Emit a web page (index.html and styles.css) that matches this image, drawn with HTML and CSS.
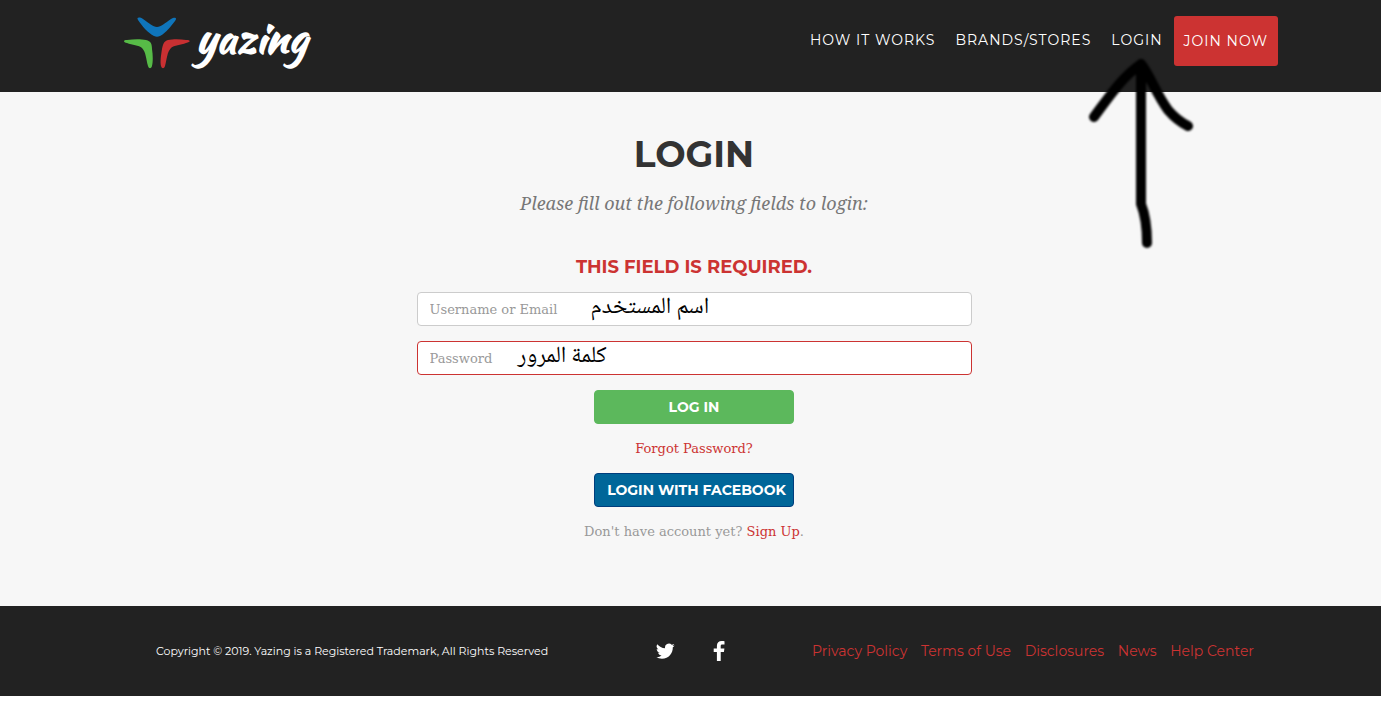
FILE: index.html
```
<!DOCTYPE html>
<html lang="en">
  <head>
    <meta charset="UTF-8" />
    <meta name="viewport" content="width=device-width, initial-scale=1.0" />
    <title>Yazing - Login</title>
    <link rel="stylesheet" href="styles.css">
  </head>
  <body>
    <header class="header">
      <div class="container header-row">
        <a class="logo" href="#" aria-label="yazing">
          <svg width="67" height="53" viewBox="0 0 67 53" aria-hidden="true">
            <path fill="#0f75bb" d="M14 4 C12 1 16 1 19 3 C25 7 29 11 33 11 C37 11 41 7 47 3 C50 1 54 1 51 5 C47 10 42 17 36 20 C34 21 32 21 30 20 C24 17 18 10 14 4 Z" />
            <path fill="#57bb47" d="M3 24 C10 23 17 23 22 24 C27 25 28 28 28 33 C29 39 29 46 28 50 C27 53 25 53 24 50 C22 43 22 36 18 32 C15 29 8 29 3 27 C-1 26 -1 24 3 24 Z" />
            <path fill="#c93032" d="M62 24 C56 23 49 23 44 24 C40 25 39 28 38 33 C37 39 36 46 37 50 C38 53 40 53 41 50 C43 43 43 36 47 32 C50 29 57 29 62 27 C67 26 67 24 62 24 Z" />
          </svg>
          <span>yazing</span>
        </a>
        <nav class="nav">
          <a href="#">HOW IT WORKS</a>
          <a href="#">BRANDS/STORES</a>
          <div class="nav-login">
            <a href="#">LOGIN</a>
            <svg class="arrow" width="120" height="200" viewBox="0 0 120 200" aria-hidden="true">
              <path d="M13 66 C28 46 40 27 60 13 C69 24 75 43 87 59 C93 66 99 71 107 75 M60 13 L60 153 C64 163 66 176 66 192" />
            </svg>
          </div>
          <a class="join" href="#">JOIN NOW</a>
        </nav>
      </div>
    </header>

    <main class="main">
      <div class="container">
        <h1>LOGIN</h1>
        <p class="subtitle">Please fill out the following fields to login:</p>
        <form class="login-form">
          <h2 class="error">THIS FIELD IS REQUIRED.</h2>
          <div class="form-group">
            <input type="text" id="username" placeholder="Username or Email" aria-label="Username or Email" />
            <label class="note note-user" for="username" lang="ar" dir="rtl">اسم المستخدم</label>
          </div>
          <div class="form-group has-error">
            <input type="password" id="password" placeholder="Password" aria-label="Password" />
            <label class="note note-pass" for="password" lang="ar" dir="rtl">كلمة المرور</label>
          </div>
          <button type="submit" class="btn">LOG IN</button>
          <a class="forgot" href="#">Forgot Password?</a>
          <button type="button" class="btn btn-facebook">LOGIN WITH FACEBOOK</button>
          <p class="signup">Don't have account yet? <a href="#">Sign Up</a>.</p>
        </form>
      </div>
    </main>

    <footer class="footer">
      <div class="container footer-row">
        <span class="copyright">Copyright © 2019. Yazing is a Registered Trademark, All Rights Reserved</span>
        <div class="social">
          <a href="#" aria-label="Twitter">
            <svg width="19" height="20" viewBox="0 0 24 24">
              <path d="M23.6 4.9c-.9.4-1.800.6-2.800.8 1-.6 1.800-1.600 2.100-2.700-.9.6-2 1-3.100 1.200a4.850 4.850 0 0 0-8.300 4.400C7.500 8.400 3.900 6.500 1.600 3.500a4.850 4.850 0 0 0 1.500 6.500c-.8 0-1.500-.2-2.200-.6v.1c0 2.300 1.700 4.300 3.900 4.700-.7.2-1.500.2-2.200.1.6 1.900 2.400 3.300 4.500 3.400A9.800 9.800 0 0 1 0 19.700a13.800 13.800 0 0 0 7.500 2.200c9 0 14-7.500 13.700-14.500.9-.7 1.800-1.500 2.400-2.500z" />
            </svg>
          </a>
          <a href="#" aria-label="Facebook">
            <svg width="20" height="20" viewBox="0 0 20 20">
              <path d="M15.500.2v3.200h-2c-1.500 0-1.800.7-1.800 1.700v2.300h3.700l-.5 3.600h-3.200v9H7.900v-9H4.700V7.400h3.200V4.700C7.900 1.600 9.800 0 12.700 0c1.300 0 2.500.1 2.800.2z" />
            </svg>
          </a>
        </div>
        <nav class="links">
          <a href="#">Privacy Policy</a>
          <a href="#">Terms of Use</a>
          <a href="#">Disclosures</a>
          <a href="#">News</a>
          <a href="#">Help Center</a>
        </nav>
      </div>
    </footer>
  </body>
</html>
```
FILE: styles.css
```
* {
  box-sizing: border-box;
}

body {
  margin: 0;
  background-color: #fff;
  color: #333;
  font-family: Montserrat, Inter, sans-serif;
  font-size: 14px;
  line-height: 20px;
}

a {
  color: #cc3332;
  text-decoration: none;
}

.header,
.main,
.footer {
  padding-left: 7px;
}

.container {
  max-width: 1170px;
  margin: 0 auto;
  padding: 0 15px;
}

.header {
  background-color: #222;
}

.header-row {
  display: flex;
  justify-content: space-between;
  align-items: flex-start;
  height: 92px;
  padding: 16px 1px 0 15px;
}

.logo {
  display: flex;
  gap: 5px;
  color: #fff;
  font-family: "Kaushan Script", Lato, sans-serif;
  font-size: 42px;
  font-weight: 900;
  line-height: 44px;
}

.nav {
  display: flex;
  gap: 20px;
  font-size: 14px;
  letter-spacing: 1px;
  line-height: 48px;
}

.nav a {
  color: #fff;
}

.nav .join {
  margin-left: -9px;
  padding: 0 10px;
  border-radius: 3px;
  background-color: #cc3332;
  line-height: 50px;
}

.nav-login {
  position: relative;
}

.arrow {
  position: absolute;
  top: 35px;
  right: -38px;
  z-index: 1;
  pointer-events: none;
}

.arrow path {
  fill: none;
  stroke: #000;
  stroke-width: 10;
  stroke-linecap: round;
  stroke-linejoin: round;
  filter: blur(1px);
}

.main {
  padding-top: 40px;
  padding-bottom: 64px;
  background-color: #f7f7f7;
  text-align: center;
}

h1 {
  margin: 0;
  font-size: 36px;
  font-weight: 700;
  line-height: 44px;
}

.subtitle {
  margin: 15px 0 42px;
  color: #777;
  font-family: "Droid Serif", "Noto Serif", "DejaVu Serif", serif;
  font-size: 18px;
  font-style: italic;
  line-height: 24px;
}

.login-form {
  display: flex;
  flex-direction: column;
  align-items: center;
  max-width: 555px;
  margin: 0 auto;
  font-family: "Roboto Slab", "DejaVu Serif", serif;
}

.error {
  margin: 0 0 15px;
  color: #cc3332;
  font-family: Montserrat, Inter, sans-serif;
  font-size: 18px;
  font-weight: 700;
  line-height: 20px;
}

.form-group {
  position: relative;
  width: 100%;
  margin-bottom: 15px;
}

.form-group input {
  display: block;
  width: 100%;
  height: 34px;
  padding: 6px 12px;
  border: 1px solid #ccc;
  border-radius: 4px;
  background-color: #fff;
  font-family: inherit;
  font-size: 13px;
}

.form-group input::placeholder {
  color: #999;
}

.form-group.has-error input {
  border-color: #cc3332;
}

.note {
  position: absolute;
  top: 0;
  color: #000;
  font-family: "Noto Naskh Arabic", "DejaVu Sans", sans-serif;
  font-size: 23px;
  line-height: 32px;
  white-space: nowrap;
}

.note-user {
  left: 174px;
}

.note-pass {
  left: 101px;
}

.btn {
  width: 200px;
  height: 34px;
  padding: 0;
  border: 1px solid #5cb85c;
  border-radius: 4px;
  background-color: #5cb85c;
  color: #fff;
  font-family: Montserrat, Inter, sans-serif;
  font-size: 14px;
  font-weight: 700;
  cursor: pointer;
}

.btn-facebook {
  padding-left: 5px;
  border-color: #003d7d;
  background-color: #006699;
}

.forgot,
.signup {
  margin: 15px 0;
  font-size: 13px;
  line-height: 20px;
}

.forgot {
  margin-bottom: 14px;
}

.signup {
  margin-bottom: 0;
  color: #999;
}

.footer {
  background-color: #222;
}

.footer-row {
  display: grid;
  grid-template-columns: 500fr 156fr 442fr;
  align-items: center;
  height: 90px;
  padding: 0 25px 0 47px;
}

.copyright {
  color: #fff;
  font-size: 11px;
}

.social {
  display: flex;
  gap: 34px;
}

.social svg {
  display: block;
  fill: #fff;
}

.links {
  display: flex;
  justify-content: space-between;
}
```
